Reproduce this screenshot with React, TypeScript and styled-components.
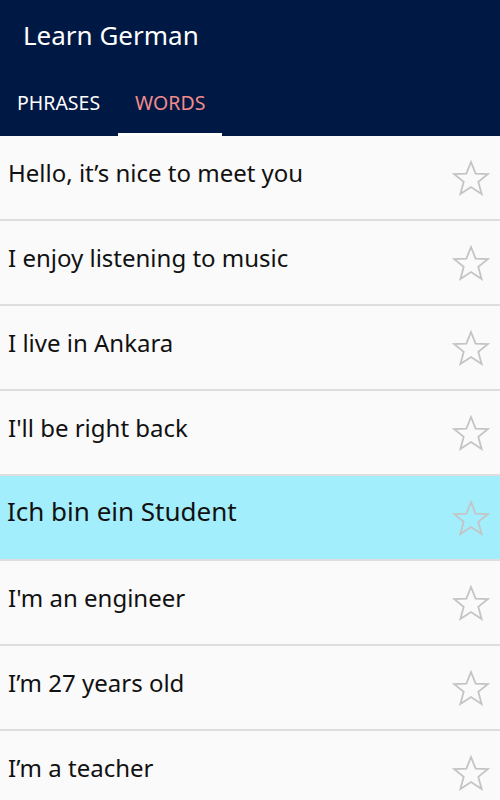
import styled, { createGlobalStyle } from "styled-components";

const GlobalStyle = createGlobalStyle`
  body {
    margin: 0;
    background: #fafafa;
    font-family: "Noto Sans", "Open Sans", sans-serif;
  }
`;

const Page = styled.div`
  width: 500px;
  height: 800px;
  overflow: hidden;
  background: #fafafa;
`;

const Header = styled.header`
  background: #001944;
  height: 136px;
  display: flex;
  flex-direction: column;
`;

const Title = styled.h1`
  margin: 0;
  padding: 18px 0 0 23px;
  height: 52px;
  color: #ffffff;
  font-size: 26px;
  font-weight: 400;
  line-height: 34px;
`;

const Tabs = styled.nav`
  display: flex;
  margin-top: auto;
  gap: 1px;
`;

const Tab = styled.div<{ $active?: boolean }>`
  padding: 2px 17px 0;
  height: 66px;
  display: flex;
  align-items: center;
  box-sizing: border-box;
  font-size: 19.5px;
  color: ${(p) => (p.$active ? "#f28b8b" : "#ffffff")};
  border-bottom: 3px solid ${(p) => (p.$active ? "#ffffff" : "transparent")};
`;

const List = styled.ul`
  list-style: none;
  margin: 0;
  padding: 0;
`;

const Row = styled.li<{ $selected?: boolean }>`
  height: 83px;
  display: flex;
  align-items: center;
  justify-content: space-between;
  padding: 0 10px 0 8px;
  background: ${(p) => (p.$selected ? "#a3eefc" : "#fafafa")};
  border-bottom: 2px solid #dedede;
`;

const Phrase = styled.span<{ $selected?: boolean }>`
  color: #111111;
  font-size: ${(p) => (p.$selected ? "26px" : "24px")};
  margin-top: ${(p) => (p.$selected ? "-13px" : "-10px")};
  margin-left: ${(p) => (p.$selected ? "-1px" : "0")};
`;

const Star = () => (
  <svg width="38" height="36" viewBox="0 0 38 36">
    <polygon
      points="19,2 23.6,13.6 36,14 26.3,21.8 29.6,34 19,27 8.4,34 11.7,21.8 2,14 14.4,13.6"
      fill="none"
      stroke="#c4c4c4"
      strokeWidth="1.8"
      strokeLinejoin="miter"
    />
  </svg>
);

const phrases = [
  "Hello, it’s nice to meet you",
  "I enjoy listening to music",
  "I live in Ankara",
  "I'll be right back",
  "Ich bin ein Student",
  "I'm an engineer",
  "I’m 27 years old",
  "I’m a teacher",
];

export default function App() {
  return (
    <Page>
      <GlobalStyle />
      <Header>
        <Title>Learn German</Title>
        <Tabs>
          <Tab>PHRASES</Tab>
          <Tab $active>WORDS</Tab>
        </Tabs>
      </Header>
      <List>
        {phrases.map((p, i) => (
          <Row key={p} $selected={i === 4}>
            <Phrase $selected={i === 4}>{p}</Phrase>
            <Star />
          </Row>
        ))}
      </List>
    </Page>
  );
}
